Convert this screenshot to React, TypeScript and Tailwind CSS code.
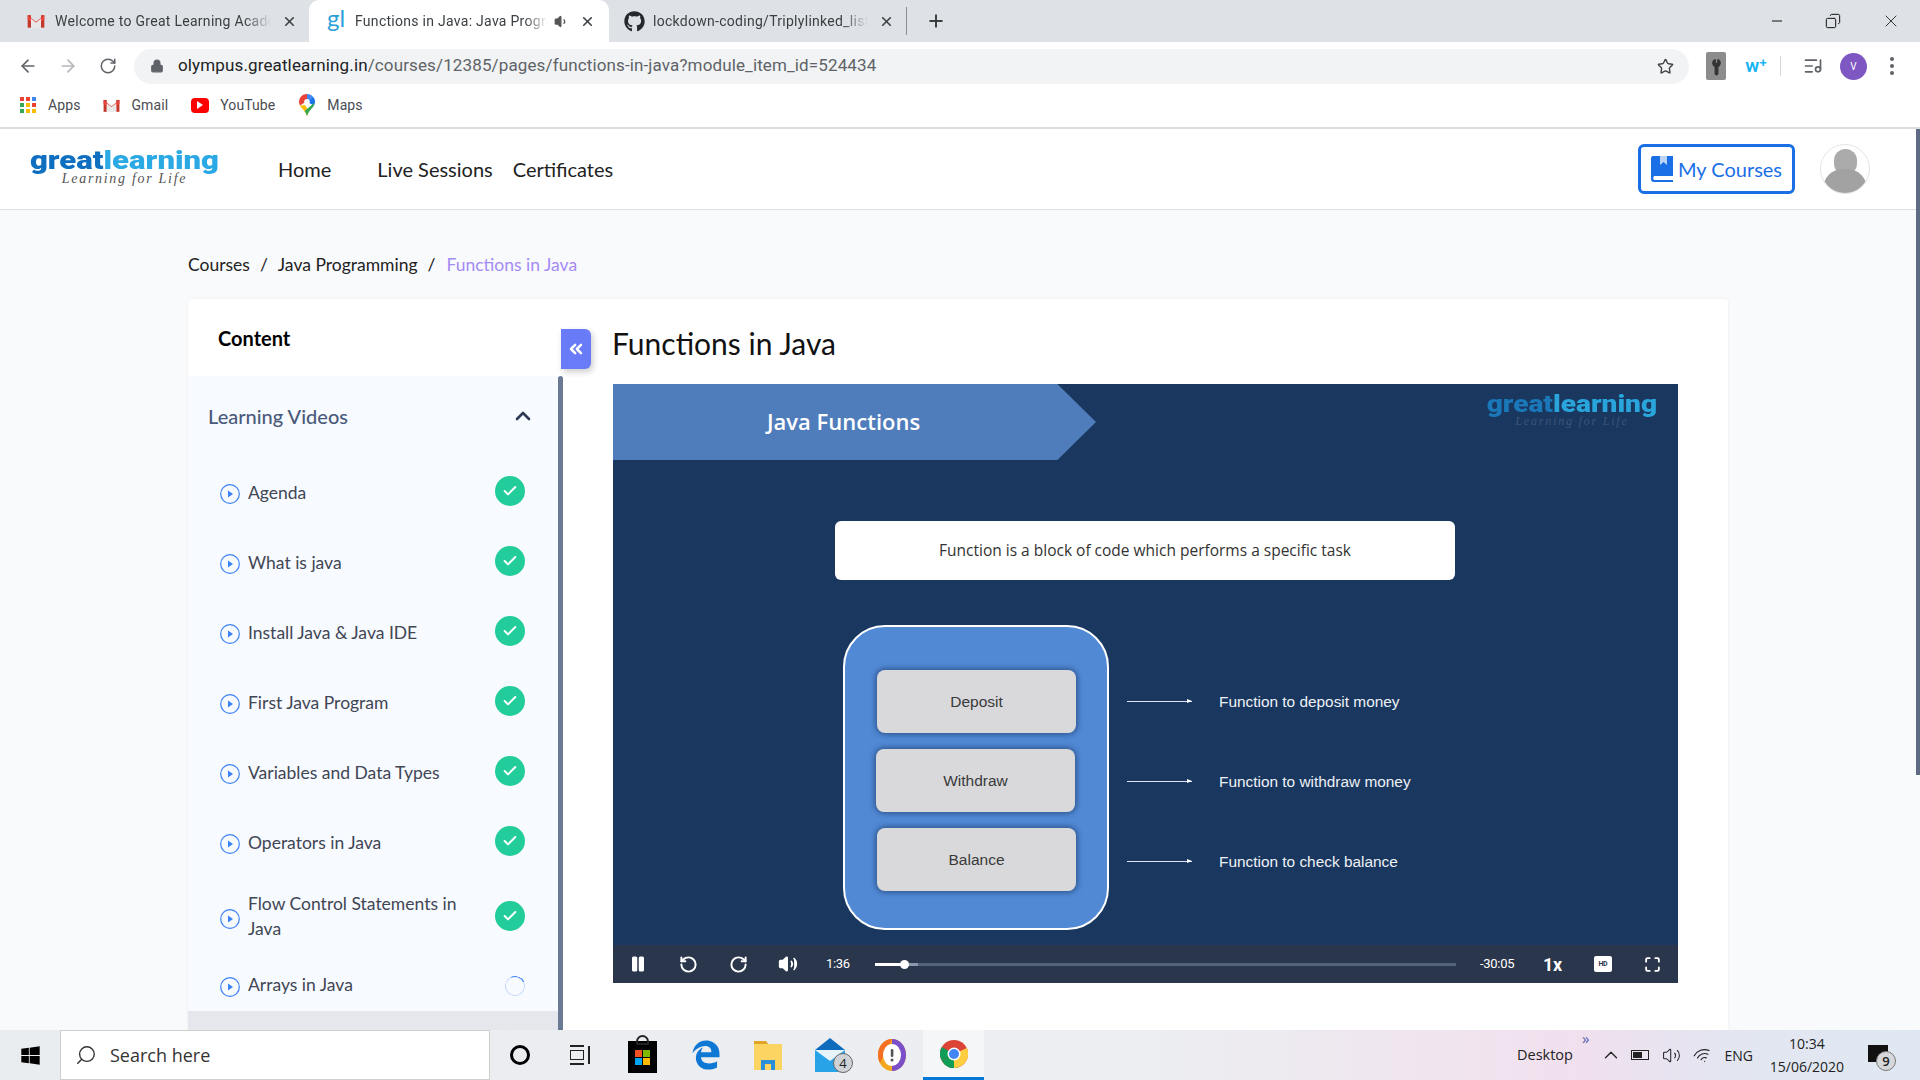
import {
  ArrowLeft,
  ArrowRight,
  Check,
  ChevronUp,
  ChevronsLeft,
  ChevronUp as Caret,
  Copy,
  ListMusic,
  Lock,
  Maximize,
  Minus,
  Pause,
  Plus,
  RotateCcw,
  RotateCw,
  Search,
  Star,
  Volume1,
  Volume2,
  Wifi,
  Wrench,
  X,
} from "lucide-react";
import { FaEdgeLegacy, FaGithub, FaWindows } from "react-icons/fa6";

const lessons = [
  "Agenda",
  "What is java",
  "Install Java & Java IDE",
  "First Java Program",
  "Variables and Data Types",
  "Operators in Java",
];

const GmailIcon = ({ size = 20 }: { size?: number }) => (
  <svg width={size} height={size} viewBox="0 0 24 24" className="shrink-0">
    <path d="M2 5h4v15H2z" fill="#c5372c" />
    <path d="M18 5h4v15h-4z" fill="#c5372c" />
    <path d="M2 5l10 8 10-8v5l-10 7L2 10z" fill="#e8453c" />
    <path d="M6 9v11h12V9l-6 5z" fill="#e8e8e8" />
  </svg>
);

const MapsIcon = () => (
  <svg width="16" height="22" viewBox="0 0 16 22" className="shrink-0">
    <path d="M8 0C3.6 0 0 3.5 0 7.8c0 1.4.4 2.6 1 3.7L8 7z" fill="#ea4335" />
    <path d="M8 0c2.4 0 4.5 1 6 2.7L8 8z" fill="#4285f4" />
    <path d="M14 2.7c1.2 1.4 2 3.2 2 5.1 0 1.3-.4 2.5-1 3.6L8 8z" fill="#1a73e8" />
    <path d="M1 11.5C3 15 6.500 17 8 22l2-5-4-6z" fill="#fbbc04" />
    <path d="M15 11.400C13 15 9.500 17 8 22c-.6-2-1.400-3.500-2.300-5L15 9z" fill="#34a853" />
    <circle cx="8" cy="7.800" r="2.800" fill="#fff" />
  </svg>
);

const AppsIcon = () => {
  const colors = ["#ea4335", "#ea4335", "#4285f4", "#34a853", "#fbbc04", "#ea4335", "#34a853", "#fbbc04", "#fbbc04"];
  return (
    <div className="grid grid-cols-3 gap-[2px] w-[16px] shrink-0">
      {colors.map((c, i) => (
        <span key={i} className="w-[4px] h-[4px]" style={{ backgroundColor: c }} />
      ))}
    </div>
  );
};

const ChromeLogo = () => (
  <svg width="28" height="28" viewBox="0 0 28 28">
    <circle cx="14" cy="14" r="14" fill="#db4437" />
    <path d="M14 14L2 21A14 14 0 0 1 1.800 7z" fill="#0f9d58" />
    <path d="M2 21l12-7 4 14A14 14 0 0 1 2 21z" fill="#0f9d58" />
    <path d="M14 14l12.800-6A14 14 0 0 1 14 28z" fill="#ffcd40" />
    <circle cx="14" cy="14" r="6.500" fill="#fff" />
    <circle cx="14" cy="14" r="5" fill="#4285f4" />
  </svg>
);

const StoreIcon = () => (
  <div className="w-[29px] h-[32px] bg-black mt-[4px] relative grid grid-cols-2 gap-[1px] content-center justify-center px-[7px]">
    <span className="absolute -top-[6px] left-[8px] w-[13px] h-[10px] border-2 border-[#222] rounded-t-full" />
    <span className="h-[7px] bg-[#f25022]" />
    <span className="h-[7px] bg-[#7fba00]" />
    <span className="h-[7px] bg-[#00a4ef]" />
    <span className="h-[7px] bg-[#ffb900]" />
  </div>
);

const FolderIcon = () => (
  <svg width="28" height="30" viewBox="0 0 28 30">
    <path d="M0 1h12l3 4H0z" fill="#e0a526" />
    <path d="M0 4h28v26H0z" fill="#fcd462" />
    <path d="M7 30V20h14v10h-4v-6h-6v6z" fill="#2a8fd8" />
  </svg>
);

const MailIcon = () => (
  <svg width="30" height="34" viewBox="0 0 30 34">
    <path d="M15 0L0 12h30z" fill="#0f6cbd" />
    <path d="M0 12h30v22H0z" fill="#29a3e8" />
    <path d="M0 12l15 11 15-11z" fill="#e8f4fc" />
  </svg>
);

const BraveIcon = () => (
  <svg width="28" height="32" viewBox="0 0 28 32">
    <ellipse cx="14" cy="16" rx="14" ry="16" fill="#f4a71d" />
    <path d="M14 0c8 0 14 7 14 16S22 32 14 32z" fill="#7b4fc9" />
    <path d="M14 0C6 0 0 7 0 16c0 3 1 6 2 8z" fill="#f36f21" />
    <ellipse cx="14" cy="16" rx="9" ry="11" fill="#fff" />
    <rect x="12.800" y="10" width="2.600" height="8" rx="1.200" fill="#555" />
    <circle cx="14" cy="21" r="1.500" fill="#555" />
  </svg>
);

const Logo = ({ small = false }: { small?: boolean }) => (
  <div className={`flex flex-col items-center font-['Roboto',sans-serif] ${small ? "w-[170px]" : "w-[189px]"}`}>
    <div
      className={
        small
          ? "text-[23px] leading-[22px] font-black whitespace-nowrap scale-x-[1.22]"
          : "text-[25.500px] leading-[23px] font-black whitespace-nowrap scale-x-[1.22]"
      }
    >
      <span className={small ? "text-[#1a77b8]" : "text-[#0e6fc0]"}>great</span>
      <span className={small ? "text-[#2aa5dc]" : "text-[#2aa9e4]"}>learning</span>
    </div>
    <div
      className={
        small
          ? "font-['Liberation_Serif',serif] italic text-[12px] leading-[11px] tracking-[1.8px] text-[#3e5578]"
          : "font-['Liberation_Serif',serif] italic text-[14px] leading-[13px] tracking-[1.7px] text-[#555]"
      }
    >
      Learning for Life
    </div>
  </div>
);

const Tab = ({
  icon,
  title,
  active = false,
  audio = false,
  width,
}: {
  icon: React.ReactNode;
  title: string;
  active?: boolean;
  audio?: boolean;
  width: string;
}) => (
  <div
    className={`${width} h-[42px] shrink-0 flex items-center ${
      active ? "bg-white rounded-t-[10px] pl-[16px] pr-[14px]" : "pr-[12px]"
    }`}
  >
    <div className="w-[22px] flex justify-center shrink-0">{icon}</div>
    <div className="ml-[8px] flex-1 min-w-0 overflow-hidden whitespace-nowrap text-[14px] tracking-[0.28px] text-[#3c4043] [mask-image:linear-gradient(to_right,black_88%,transparent)]">
      {title}
    </div>
    {audio && <Volume1 size={15} className="ml-[6px] shrink-0 text-[#555] fill-[#555]" />}
    <X size={15} strokeWidth={2.6} className="ml-[11px] shrink-0 text-[#3c4043]" />
  </div>
);

const PlayCircle = () => (
  <svg width="20" height="20" viewBox="0 0 20 20" className="shrink-0 mt-[6px]">
    <circle cx="10" cy="10" r="9.300" fill="none" stroke="#3b82f6" strokeWidth="1.200" />
    <path d="M8 6.500v7l5-3.500z" fill="#3b82f6" />
  </svg>
);

const DoneBadge = () => (
  <div className="w-[30px] h-[30px] rounded-full bg-[#23cc9b] flex items-center justify-center shrink-0">
    <Check size={16} strokeWidth={3} className="text-white" />
  </div>
);

const Lesson = ({ title }: { title: string }) => (
  <div className="h-[70px] flex items-center pl-[32px] pr-[33px] text-[17.5px] text-[#3f4654]">
    <PlayCircle />
    <span className="ml-[8px] flex-1 mt-[5px]">{title}</span>
    <DoneBadge />
  </div>
);

const SlideBox = ({ label, shift = "" }: { label: string; shift?: string }) => (
  <div
    className={`w-[199px] h-[63px] rounded-[8px] bg-[#d9d9dc] shadow-[0_0_5px_2px_rgba(30,60,110,0.6)] flex items-center justify-center font-['Liberation_Sans',sans-serif] text-[15.500px] text-[#3a3a3a] ${shift}`}
  >
    {label}
  </div>
);

const SlideNote = ({ label }: { label: string }) => (
  <div className="h-[63px] flex items-center">
    <div className="w-[65px] h-[1px] bg-[#dfe6f0] relative">
      <span className="absolute right-0 -top-[2px] border-l-[5px] border-l-white border-y-[2.500px] border-y-transparent" />
    </div>
    <span className="ml-[27px] font-['Liberation_Sans',sans-serif] text-[15.400px] text-[#eef1f6]">{label}</span>
  </div>
);

export default function App() {
  return (
    <div className="w-[1920px] h-screen flex flex-col overflow-hidden relative bg-white font-['Lato',sans-serif]">
      {/* browser chrome */}
      <div className="h-[42px] shrink-0 bg-[#dee1e6] flex items-center pl-[8px] font-['Roboto',sans-serif]">
        <div className="w-[301px] pl-[17px] shrink-0">
          <Tab width="w-[284px]" icon={<GmailIcon />} title="Welcome to Great Learning Academy" />
        </div>
        <Tab
          width="w-[300px]"
          active
          audio
          icon={<span className="font-['Lato',sans-serif] text-[24px] leading-[24px] text-[#2b9fd8] -mt-[6px]">gl</span>}
          title="Functions in Java: Java Programming"
        />
        <div className="w-[297px] pl-[14px] shrink-0">
          <Tab width="w-[283px]" icon={<FaGithub size={21} className="text-[#24292e]" />} title="lockdown-coding/Triplylinked_list" />
        </div>
        <div className="w-[1px] h-[28px] bg-[#8a8d91]" />
        <Plus size={20} strokeWidth={2.400} className="ml-[19px] text-[#3c4043]" />
        <div className="ml-auto flex items-center mr-[19px] gap-[40px] text-[#111]">
          <Minus size={16} strokeWidth={1.500} />
          <Copy size={16} strokeWidth={1.500} className="-scale-x-100" />
          <X size={20} strokeWidth={1} />
        </div>
      </div>

      <div className="h-[48px] shrink-0 flex items-center pl-[18px] font-['Roboto',sans-serif]">
        <ArrowLeft size={20} className="text-[#5f6368]" />
        <ArrowRight size={20} className="ml-[20px] text-[#b5b7ba]" />
        <RotateCw size={18} className="ml-[21px] text-[#5f6368]" />
        <div className="ml-[17px] w-[1555px] h-[35px] rounded-full bg-[#f1f3f4] flex items-center pl-[16px] pr-[15px]">
          <Lock size={14} className="text-[#5f6368] fill-[#5f6368]" />
          <div className="ml-[14px] text-[17px] tracking-[0.13px] text-[#202124]">
            olympus.greatlearning.in
            <span className="text-[#5f6368]">/courses/12385/pages/functions-in-java?module_item_id=524434</span>
          </div>
          <Star size={17} className="ml-auto text-[#444]" />
        </div>
        <div className="ml-[17px] w-[20px] h-[28px] bg-[#8c8c8c] rounded-[2px] flex items-center justify-center">
          <Wrench size={15} className="text-[#333] fill-[#333] -rotate-45" />
        </div>
        <span className="ml-[16px] w-[28px] text-center font-semibold text-[19px] text-[#16b5f2]">w⁺</span>
        <div className="ml-[10px] w-[1px] h-[20px] bg-[#d5d7da]" />
        <ListMusic size={20} className="ml-[22px] text-[#5f6368]" />
        <div className="ml-[17px] w-[27px] h-[27px] rounded-full bg-[#7e57c2] text-white text-[10px] flex items-center justify-center">V</div>
        <div className="ml-[23px] flex flex-col gap-[3px]">
          <span className="w-[4px] h-[4px] rounded-full bg-[#5f6368]" />
          <span className="w-[4px] h-[4px] rounded-full bg-[#5f6368]" />
          <span className="w-[4px] h-[4px] rounded-full bg-[#5f6368]" />
        </div>
      </div>

      <div className="h-[39px] shrink-0 flex items-center pl-[20px] pb-[7px] text-[14px] tracking-[0.1px] text-[#4a4d51] font-['Roboto',sans-serif] border-b-2 border-[#dcdde0]">
        <AppsIcon />
        <span className="ml-[12px]">Apps</span>
        <div className="ml-[22px]"><GmailIcon size={19} /></div>
        <span className="ml-[10px]">Gmail</span>
        <div className="ml-[23px] w-[18px] h-[15px] rounded-[4px] bg-[#f00] flex items-center justify-center">
          <span className="border-l-[6px] border-l-white border-y-[4px] border-y-transparent" />
        </div>
        <span className="ml-[11px]">YouTube</span>
        <div className="ml-[24px]"><MapsIcon /></div>
        <span className="ml-[12px]">Maps</span>
      </div>

      {/* site header */}
      <header className="h-[81px] shrink-0 flex items-center border-b border-[#dedfe2] pl-[30px] pr-[50px] text-[20px] text-[#222]">
        <div className="mb-[5px]">
          <Logo />
        </div>
        <nav className="ml-[59px] flex items-center">
          <a>Home</a>
          <a className="ml-[46px]">Live Sessions</a>
          <a className="ml-[20px]">Certificates</a>
        </nav>
        <button className="ml-auto w-[157px] h-[50px] rounded-[6px] border-[3px] border-[#1a6fe6] flex items-center justify-center text-[#1a6fe6]">
          <svg width="22" height="26" viewBox="0 0 22 26" className="mr-[5px]">
            <path d="M2 0h20v20H3a3 3 0 0 0 0 4h19v2H3c-2 0-3-1-3-3V2c0-1 1-2 2-2z" fill="#1a6fe6" />
            <path d="M9 0h7v9l-3.500-3L9 9z" fill="#fff" opacity="0.700" />
          </svg>
          My Courses
        </button>
        <div className="ml-[25px] w-[50px] h-[50px] rounded-full border border-[#e4e4e4] overflow-hidden flex flex-col items-center">
          <span className="mt-[4px] w-[23px] h-[32px] rounded-full bg-[#ababab]" />
          <span className="-mt-[6px] w-[44px] h-[30px] rounded-t-[20px] bg-[#a2a2a2]" />
        </div>
      </header>

      {/* page body */}
      <main className="flex-1 min-h-0 bg-[#f9fafc] pl-[188px] flex flex-col overflow-hidden">
        <div className="h-[89px] shrink-0 pt-[42px] flex text-[17.500px] leading-[26px] text-[#222]">
          <span>Courses</span>
          <span className="ml-[10px]">/</span>
          <span className="ml-[10px]">Java Programming</span>
          <span className="ml-[10px]">/</span>
          <span className="ml-[11px] text-[#a48bf5]">Functions in Java</span>
        </div>

        <div className="w-[1540px] flex-1 min-h-0 flex rounded-t-[4px] bg-white shadow-[0_0_3px_rgba(0,0,0,0.06)]">
          <aside className="w-[375px] shrink-0 flex flex-col">
            <div className="h-[77px] shrink-0 pl-[30px] flex items-center text-[20px] font-bold text-black">Content</div>
            <div className="flex-1 min-h-0 flex">
              <div className="flex-1 flex flex-col bg-[#e5e7ec]">
                <div className="bg-[#f7faff]">
                  <div className="h-[80px] flex items-center pl-[20px] pr-[23px] text-[20px] font-medium text-[#4a5a7a]">
                    Learning Videos
                    <ChevronUp size={24} strokeWidth={2.600} className="ml-auto text-[#2e3a55]" />
                  </div>
                  {lessons.map((title) => (
                    <Lesson key={title} title={title} />
                  ))}
                  <div className="h-[80px] flex items-center pl-[32px] pr-[33px] text-[17.500px] leading-[25px] text-[#3f4654]">
                    <PlayCircle />
                    <span className="ml-[8px] flex-1 pr-[20px]">Flow Control Statements in Java</span>
                    <DoneBadge />
                  </div>
                  <div className="h-[55px] pt-[1px] flex items-center pl-[32px] pr-[33px] text-[17.500px] text-[#3f4654]">
                    <PlayCircle />
                    <span className="ml-[8px] flex-1 mt-[2px]">Arrays in Java</span>
                    <span className="w-[20px] h-[20px] mt-[4px] rounded-full border border-[#c6dafb] border-t-[#3b82f6] rotate-[20deg]" />
                  </div>
                </div>
              </div>
              <div className="w-[5px] bg-[#6b7a94] rounded-t-[3px]" />
            </div>
          </aside>

          <section className="flex-1 relative pl-[50px]">
            <button className="absolute -left-[2px] top-[30px] w-[30px] h-[40px] rounded-r-[6px] bg-[#6a7bfa] shadow-[2px_3px_6px_rgba(0,0,0,0.2)] flex items-center justify-center">
              <ChevronsLeft size={20} strokeWidth={3} className="text-white" />
            </button>
            <h1 className="h-[85px] pt-[25px] -ml-[1px] text-[30px] leading-[38px] text-[#111]">Functions in Java</h1>

            {/* video player */}
            <div className="w-[1065px] h-[599px] flex flex-col bg-[#19375f]">
              <div className="h-[561px] shrink-0">
                <div className="flex items-start">
                  <div className="w-[483px] h-[76px] bg-[#4f7dbb] pl-[154px] pb-[2px] flex items-center font-['Open_Sans',sans-serif] font-semibold text-[22px] text-white [clip-path:polygon(0_0,92%_0,100%_50%,92%_100%,0_100%)]">
                    Java Functions
                  </div>
                  <div className="ml-auto mr-[21px] mt-[10px]">
                    <Logo small />
                  </div>
                </div>

                <div className="ml-[222px] mt-[61px] w-[620px] h-[59px] rounded-[6px] bg-white flex items-center justify-center font-['Open_Sans',sans-serif] font-medium text-[15.500px] text-[#333]">
                  Function is a block of code which performs a specific task
                </div>

                <div className="ml-[230px] mt-[45px] flex items-start">
                  <div className="w-[266px] h-[305px] rounded-[42px] border-2 border-white bg-[#5189d5] pt-[43px] pl-[32px] flex flex-col gap-[16px]">
                    <SlideBox label="Deposit" />
                    <SlideBox label="Withdraw" shift="-ml-[1px]" />
                    <SlideBox label="Balance" />
                  </div>
                  <div className="ml-[18px] mt-[45px] flex flex-col gap-[17px]">
                    <SlideNote label="Function to deposit money" />
                    <SlideNote label="Function to withdraw money" />
                    <SlideNote label="Function to check balance" />
                  </div>
                </div>
              </div>

              <div className="flex-1 bg-[#2a364b] flex items-center pl-[16px] text-white text-[13px] tracking-[-0.3px] font-['Roboto',sans-serif]">
                <Pause size={18} fill="white" />
                <RotateCcw size={19} strokeWidth={2.500} className="ml-[32px]" />
                <RotateCw size={19} strokeWidth={2.500} className="ml-[31px]" />
                <Volume2 size={20} fill="white" className="ml-[30px]" />
                <span className="ml-[28px] w-[24px]">1:36</span>
                <div className="ml-[25px] w-[581px] h-[3px] bg-[#53637c] flex items-center relative">
                  <div className="w-[43px] h-full bg-[#8a97ac] relative">
                    <div className="w-[30px] h-full bg-white" />
                    <span className="absolute left-[25px] -top-[3px] w-[9px] h-[9px] rounded-full bg-white" />
                  </div>
                </div>
                <span className="ml-[24px] w-[38px]">-30:05</span>
                <span className="ml-[25px] text-[18px] font-bold">1x</span>
                <span className="ml-[32px] w-[18px] h-[16px] rounded-[2px] bg-white text-[#2a364b] text-[7px] font-bold flex items-center justify-center">HD</span>
                <Maximize size={17} strokeWidth={2.600} className="ml-[32px]" />
              </div>
            </div>
          </section>
        </div>
      </main>

      {/* windows taskbar */}
      <footer className="h-[50px] shrink-0 flex items-center bg-[linear-gradient(90deg,#eaedf0_0%,#eceef1_60%,#f1e0ee_82%,#e3e6f1_90%,#dfe8f2_100%)] font-['Open_Sans',sans-serif] text-[#222]">
        <FaWindows size={21} className="ml-[20px] text-black" />
        <div className="ml-[19px] w-[430px] h-[50px] bg-white border border-[#cfcfcf] flex items-center pl-[14px] text-[18px] text-[#333]">
          <Search size={22} strokeWidth={1.500} className="-scale-x-100" />
          <span className="ml-[13px]">Search here</span>
        </div>
        <span className="ml-[20px] w-[20px] h-[20px] rounded-full border-[3px] border-black" />
        <div className="ml-[40px] w-[22px] h-[20px] flex items-center">
          <div className="w-[14px] h-[20px] border-y-2 border-[#222] flex items-center">
            <span className="w-full h-[10px] border border-[#222]" />
          </div>
          <span className="ml-[4px] w-[2px] h-[18px] bg-[#222]" />
        </div>
        <div className="ml-[36px]"><StoreIcon /></div>
        <FaEdgeLegacy size={30} className="ml-[34px] text-[#0f78d4]" />
        <div className="ml-[33px]"><FolderIcon /></div>
        <div className="ml-[33px] relative">
          <MailIcon />
          <span className="absolute left-[18px] top-[15px] w-[20px] h-[20px] rounded-full bg-[#cfd3d8] border border-[#666] text-[13px] leading-[18px] text-center">4</span>
        </div>
        <div className="ml-[33px]"><BraveIcon /></div>
        <div className="ml-[17px] w-[61px] h-[50px] bg-[#f5f6f8] border-b-[3px] border-[#0078d7] flex items-center justify-center">
          <ChromeLogo />
        </div>

        <span className="ml-[533px] text-[14.500px]">Desktop</span>
        <span className="ml-[9px] -mt-[34px] text-[15px] leading-[15px] text-[#5a5fb0]">»</span>
        <Caret size={22} strokeWidth={1.400} className="ml-[11px]" />
        <div className="ml-[9px] w-[18px] h-[10px] border border-[#222] p-[1px] relative">
          <div className="w-[9px] h-full bg-[#222]" />
        </div>
        <Volume2 size={19} strokeWidth={1.300} className="ml-[13px]" />
        <Wifi size={19} strokeWidth={1.500} className="ml-[12px] -rotate-[20deg]" />
        <span className="ml-[12px] text-[14px]">ENG</span>
        <div className="ml-[16px] w-[76px] text-center text-[14px] leading-[23px] mr-[23px]">
          <div>10:34</div>
          <div>15/06/2020</div>
        </div>
        <div className="relative w-[20px] h-[17px] bg-[#111] -mt-[4px]">
          <span className="absolute left-[8px] top-[6px] w-[20px] h-[20px] rounded-full bg-[#d5d7da] border border-[#777] text-[13px] leading-[18px] font-semibold text-center">9</span>
        </div>
      </footer>

      {/* page scrollbar */}
      <div className="absolute right-0 top-[129px] w-[4px] h-[646px] bg-[#5f6b85]" />
    </div>
  );
}
